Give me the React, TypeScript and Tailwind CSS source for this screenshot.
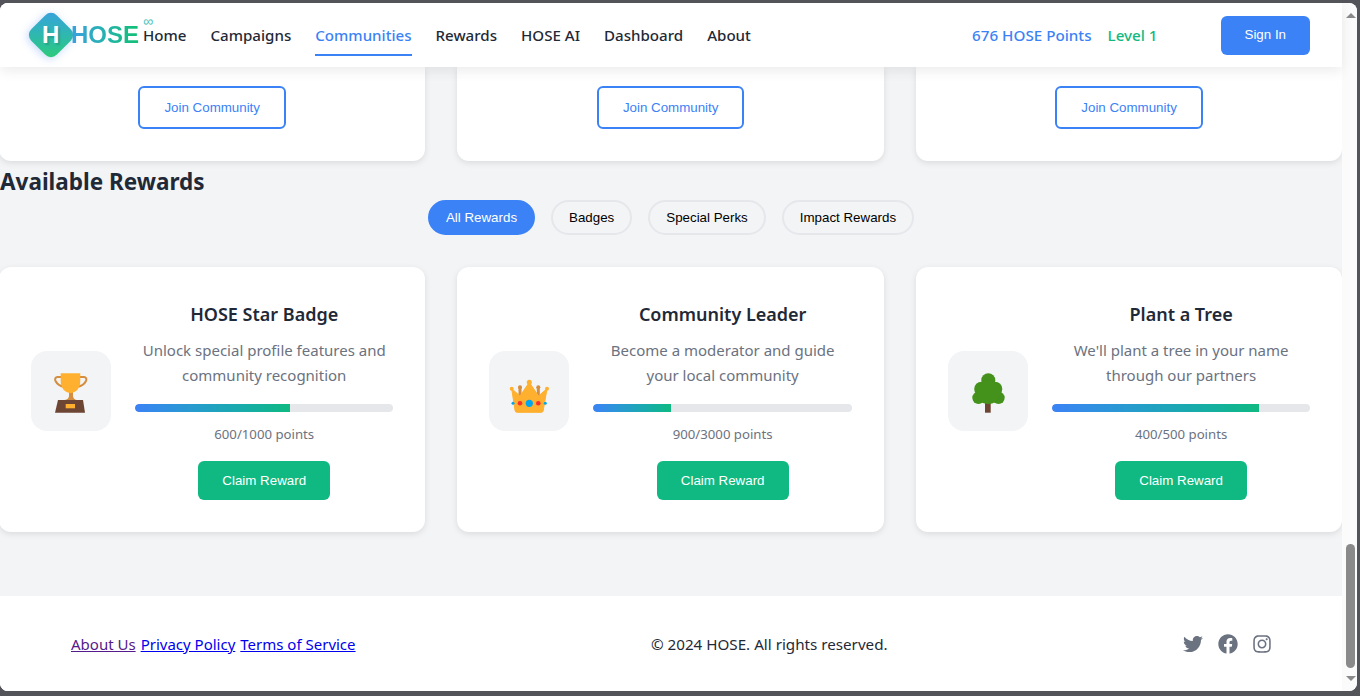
import { FaFacebook, FaInstagram, FaTwitter } from "react-icons/fa";

const navLinks = ["Home", "Campaigns", "Communities", "Rewards", "HOSE AI", "Dashboard", "About"];
const filters = ["All Rewards", "Badges", "Special Perks", "Impact Rewards"];

function TrophyIcon() {
  return (
    <svg width="48" height="48" viewBox="0 0 48 48">
      <path d="M14 10H10.5C8.5 10 7.5 12 8.5 14C10 17 13 19 17 20M33 10H37C39 10 40 12 39 14C37.5 17 34.5 19 30.500 20" fill="none" stroke="#d58d3f" strokeWidth="2" />
      <path d="M22 25H26V29C26 31 28 33 30 33H17C20 33 22 31 22 29Z" fill="#d58d3f" />
      <path d="M13.700 6.300H33.300V14C33.300 21 29 26 23.500 26C18 26 13.700 21 13.700 14Z" fill="#ffb02e" />
      <path d="M11 33H36L38 45.700H8Z" fill="#6d4534" />
      <rect x="18.700" y="37" width="9.300" height="4.300" fill="#ffb02e" />
    </svg>
  );
}

function CrownIcon() {
  return (
    <svg width="48" height="48" viewBox="0 0 48 48">
      <path d="M15 20.300V30M33.300 20.300V30" stroke="#d58d3f" strokeWidth="3" strokeLinecap="round" />
      <circle cx="15" cy="20.300" r="2" fill="#d58d3f" />
      <circle cx="33.300" cy="20.300" r="2" fill="#d58d3f" />
      <path d="M6.700 21.700L15 29L24.300 15.300L33.500 29L42 21.700L38.300 43C38.200 44.600 37.500 45.300 36 45.300H12.300C10.800 45.300 10.100 44.600 10 43Z" fill="#ffb02e" stroke="#ffb02e" strokeLinejoin="round" />
      <circle cx="6.700" cy="21.700" r="2" fill="#ffb02e" />
      <circle cx="42" cy="21.700" r="2" fill="#ffb02e" />
      <circle cx="24.300" cy="15.300" r="2.500" fill="#ffb02e" />
      <circle cx="8" cy="36.300" r="1.500" fill="#00a6ed" />
      <circle cx="40.300" cy="36.300" r="1.500" fill="#00a6ed" />
      <circle cx="15" cy="36.300" r="2.300" fill="#f8312f" />
      <circle cx="33.300" cy="36.300" r="2.300" fill="#f8312f" />
      <circle cx="24.300" cy="36.300" r="3.600" fill="#00a6ed" />
    </svg>
  );
}

function TreeIcon() {
  return (
    <svg width="48" height="48" viewBox="0 0 48 48">
      <rect x="21" y="34" width="5.700" height="11.700" fill="#6d4534" />
      <g fill="#44911b">
        <circle cx="24.300" cy="13.300" r="7" />
        <circle cx="17.500" cy="22" r="7.300" />
        <circle cx="31" cy="22" r="7.300" />
        <circle cx="14.500" cy="30.800" r="6.200" />
        <circle cx="34.500" cy="30.800" r="6.200" />
        <circle cx="24.300" cy="25" r="12" />
      </g>
    </svg>
  );
}

const rewards = [
  {
    title: "HOSE Star Badge",
    lines: ["Unlock special profile features and", "community recognition"],
    progress: 60,
    points: "600/1000 points",
    icon: <TrophyIcon />,
  },
  {
    title: "Community Leader",
    lines: ["Become a moderator and guide", "your local community"],
    progress: 30,
    points: "900/3000 points",
    icon: <CrownIcon />,
  },
  {
    title: "Plant a Tree",
    lines: ["We'll plant a tree in your name", "through our partners"],
    progress: 80,
    points: "400/500 points",
    icon: <TreeIcon />,
  },
];

function Navbar() {
  return (
    <header className="relative z-10 flex h-16 shrink-0 items-center justify-between bg-white px-8 shadow-[0_4px_12px_rgba(0,0,0,0.08)]">
      <div className="flex items-center">
        <div className="ml-[1px] flex h-9 w-9 rotate-45 items-center justify-center rounded-lg bg-gradient-to-br from-[#3b9fe0] to-[#2ecc71] shadow-[0_2px_8px_rgba(59,130,246,0.3)]">
          <span className="-rotate-45 font-['Liberation_Sans',sans-serif] text-2xl font-bold text-white [text-shadow:2px_2px_2px_rgba(0,0,0,0.15)]">H</span>
        </div>
        <div className="relative ml-[2px] mr-[4px]">
          <span className="bg-gradient-to-r from-[#3b9fe0] to-[#10c070] bg-clip-text font-['Liberation_Sans',sans-serif] text-2xl font-bold text-transparent">HOSE</span>
          <span className="absolute -right-[14px] -top-[4px] text-sm leading-3 text-[#4cc3c0]">∞</span>
        </div>
        <nav className="flex gap-6">
          {navLinks.map((link) => (
            <a
              key={link}
              className={
                link === "Communities"
                  ? "relative py-2 text-[15.100px] font-medium leading-6 text-[#3b82f6] after:absolute after:inset-x-0 after:bottom-[-1px] after:h-[2px] after:bg-[#3b82f6]"
                  : "py-2 text-[15.100px] font-medium leading-6 text-[#1f2937]"
              }
            >
              {link}
            </a>
          ))}
        </nav>
      </div>
      <div className="flex items-center">
        <span className="text-[15.200px] font-medium text-[#3b82f6]">676 HOSE Points</span>
        <span className="ml-4 text-[15.200px] font-medium text-[#10b981]">Level 1</span>
        <button className="ml-[63px] h-[39px] rounded-md bg-[#3b82f6] px-6 font-['Liberation_Sans',sans-serif] text-[13.33px] font-medium text-white">
          Sign In
        </button>
      </div>
    </header>
  );
}

function Scrollbar() {
  return (
    <div className="flex w-[15px] shrink-0 flex-col items-center bg-[#fbfbfb] pl-[2px]">
      <div className="mt-[10px] h-0 w-0 border-x-[5px] border-b-[5px] border-x-transparent border-b-[#8a8a8a]" />
      <div className="flex-1" />
      <div className="h-[124px] w-[9px] rounded-[5px] bg-[#8a8a8a]" />
      <div className="mb-[10px] mt-[8px] h-0 w-0 border-x-[5px] border-t-[5px] border-x-transparent border-t-[#8a8a8a]" />
    </div>
  );
}

export default function App() {
  return (
    <div className="h-[696px] w-[1360px] overflow-hidden bg-[#53535a] pb-[5px] pr-[3px] pt-[3px] font-['Noto_Sans',sans-serif] leading-[1.6]">
      <div className="flex h-full overflow-hidden rounded-lg bg-white">
        <div className="flex min-w-0 flex-1 flex-col bg-[#f3f4f6]">
          <Navbar />

          <div className="-ml-[1px] grid w-[1343.330px] shrink-0 grid-cols-3 gap-8">
            {[0, 1, 2].map((i) => (
              <div key={i} className="flex h-[94px] items-end justify-center rounded-b-xl bg-white pb-8 shadow-[0_2px_6px_rgba(0,0,0,0.1)]">
                <button className="h-[43px] rounded-md border-2 border-[#3b82f6] bg-white px-6 font-['Liberation_Sans',sans-serif] text-[13.33px] font-medium text-[#3b82f6]">
                  Join Community
                </button>
              </div>
            ))}
          </div>

          <h2 className="mt-[2px] h-[37px] text-[22.500px] font-bold leading-[37px] text-[#1f2937]">Available Rewards</h2>

          <div className="flex justify-center gap-4">
            {filters.map((filter) => (
              <button
                key={filter}
                className={
                  filter === "All Rewards"
                    ? "h-[35px] rounded-full border-2 border-[#3b82f6] bg-[#3b82f6] px-4 font-['Liberation_Sans',sans-serif] text-[13.33px] text-white"
                    : "h-[35px] rounded-full border-2 border-[#e5e7eb] bg-[#f3f4f6] px-4 font-['Liberation_Sans',sans-serif] text-[13.33px] text-black"
                }
              >
                {filter}
              </button>
            ))}
          </div>

          <div className="-ml-[1px] mt-8 grid w-[1343.330px] grid-cols-3 gap-8">
            {rewards.map((reward) => (
              <div key={reward.title} className="flex items-center gap-6 rounded-xl bg-white p-8 shadow-[0_2px_6px_rgba(0,0,0,0.1)]">
                <div className="mb-[18px] flex h-20 w-20 shrink-0 items-center justify-center rounded-2xl bg-[#f3f4f6]">{reward.icon}</div>
                <div className="min-w-0 flex-1 text-center">
                  <h3 className="pt-[1px] text-lg font-semibold leading-[29px] text-[#1f2937]">{reward.title}</h3>
                  <p className="mt-[9px] text-[15px] leading-[25px] text-[#6b7280]">
                    {reward.lines[0]}
                    <br />
                    {reward.lines[1]}
                  </p>
                  <div className="mt-4 h-2 overflow-hidden rounded-full bg-[#e5e7eb]">
                    <div className="h-full rounded-l-full bg-gradient-to-r from-[#3b82f6] to-[#10b981]" style={{ width: `${reward.progress}%` }} />
                  </div>
                  <div className="mt-[11px] text-[13.200px] leading-[22px] text-[#6b7280]">{reward.points}</div>
                  <button className="mt-4 h-[39px] rounded-md bg-[#10b981] px-6 font-['Liberation_Sans',sans-serif] text-[13.33px] font-medium text-white">
                    Claim Reward
                  </button>
                </div>
              </div>
            ))}
          </div>

          <footer className="mt-16 flex flex-1 items-center justify-between bg-white px-[71px]">
            <div className="flex gap-[5px] text-[15px]">
              <a href="#about" className="text-[#551a8b] underline">About Us</a>
              <a href="#privacy" className="text-[#0000ee] underline">Privacy Policy</a>
              <a href="#terms" className="text-[#0000ee] underline">Terms of Service</a>
            </div>
            <p className="pt-[2px] text-[15.200px] text-[#1f2937]">© 2024 HOSE. All rights reserved.</p>
            <div className="flex items-center gap-[15px] text-[20px] text-[#6b7280]">
              <FaTwitter />
              <FaFacebook />
              <FaInstagram className="w-[18px]" />
            </div>
          </footer>
        </div>
        <Scrollbar />
      </div>
    </div>
  );
}
